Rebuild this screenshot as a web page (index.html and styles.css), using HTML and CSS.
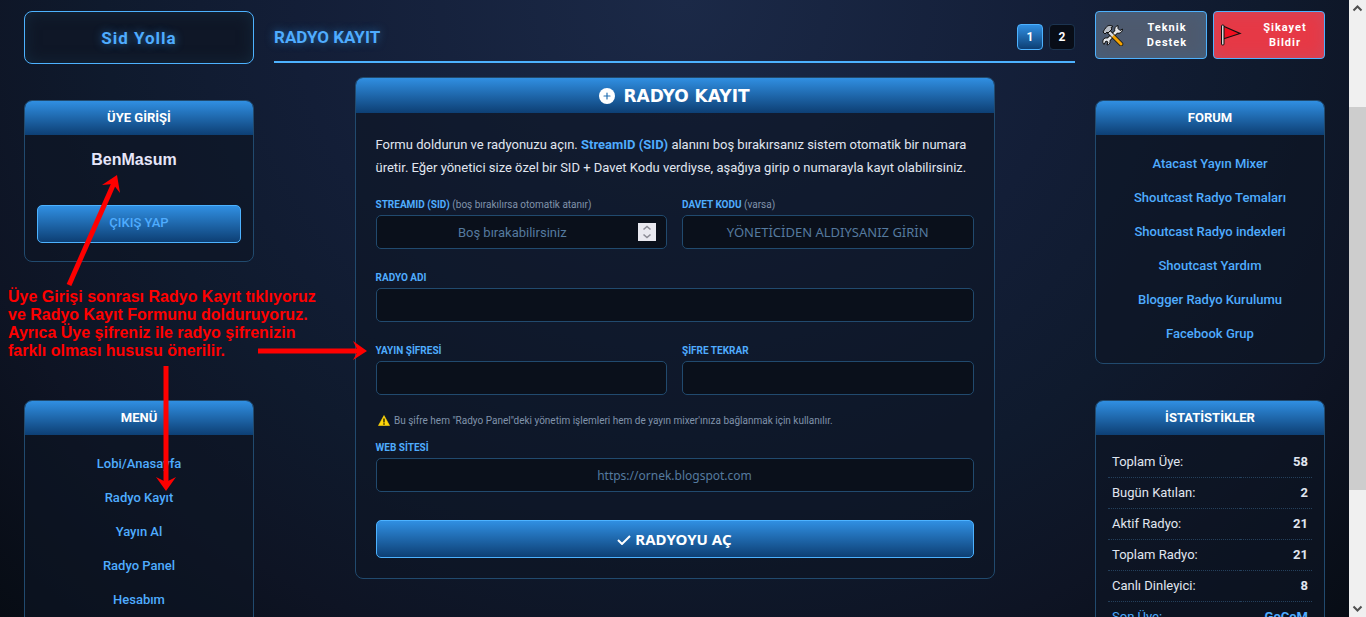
FILE: index.html
```html
<!DOCTYPE html>
<html lang="tr">
<head>
	<title>Radyo Kayıt</title>
	<meta charset="utf-8">
	<link rel="stylesheet" href="styles.css">
</head>
<body>
	<div class="page">

		<!-- sol kolon -->
		<aside class="side">
			<div class="top">
				<a href="#" class="logo">Sid Yolla</a>
			</div>
			<div class="slot">
				<section class="panel">
					<h2>ÜYE GİRİŞİ</h2>
					<div class="login">
						<p class="user">BenMasum</p>
						<button type="button" class="btn logout">ÇIKIŞ YAP</button>
					</div>
				</section>
			</div>
			<nav class="panel">
				<h2>MENÜ</h2>
				<ul class="links">
					<li><a href="#">Lobi/Anasayfa</a></li>
					<li><a href="#">Radyo Kayıt</a></li>
					<li><a href="#">Yayın Al</a></li>
					<li><a href="#">Radyo Panel</a></li>
					<li><a href="#">Hesabım</a></li>
				</ul>
			</nav>
		</aside>

		<!-- orta kolon -->
		<main class="main">
			<header class="title">
				<h1>RADYO KAYIT</h1>
				<div class="pager">
					<a href="#" class="active">1</a>
					<a href="#">2</a>
				</div>
			</header>

			<section class="panel form-panel">
				<h2>
					<svg width="16" height="16" viewBox="0 0 16 16"><circle cx="8" cy="8" r="8" fill="#fff"/><path d="M8 5v6M5 8h6" stroke="#2470b3" stroke-width="1.2" stroke-linecap="round"/></svg>
					RADYO KAYIT
				</h2>
				<form action="" method="post" onsubmit="return false;">
					<p class="intro">Formu doldurun ve radyonuzu açın. <b>StreamID (SID)</b> alanını boş bırakırsanız sistem otomatik bir numara üretir. Eğer yönetici size özel bir SID + Davet Kodu verdiyse, aşağıya girip o numarayla kayıt olabilirsiniz.</p>
					<div class="row">
						<div class="field">
							<label for="sid">STREAMID (SID) <small>(boş bırakılırsa otomatik atanır)</small></label>
							<div class="number">
								<input type="number" id="sid" name="sid" placeholder="Boş bırakabilirsiniz">
								<svg class="spin" width="18" height="18" viewBox="0 0 18 18"><path d="M5.500 6.500L9 3.500l3.500 3M5.500 11.500l3.500 3 3.500-3" fill="none" stroke="#8d8d97" stroke-width="1.600"/></svg>
							</div>
						</div>
						<div class="field">
							<label for="davet">DAVET KODU <small>(varsa)</small></label>
							<input type="text" id="davet" name="davet" placeholder="YÖNETİCİDEN ALDIYSANIZ GİRİN">
						</div>
					</div>
					<div class="field">
						<label for="ad">RADYO ADI</label>
						<input type="text" id="ad" name="ad">
					</div>
					<div class="row">
						<div class="field">
							<label for="sifre">YAYIN ŞİFRESİ</label>
							<input type="password" id="sifre" name="sifre">
						</div>
						<div class="field">
							<label for="sifre2">ŞİFRE TEKRAR</label>
							<input type="password" id="sifre2" name="sifre2">
						</div>
					</div>
					<p class="note">
						<svg width="12" height="11" viewBox="0 0 12 11"><path d="M6 .5L11.500 10.500H.5z" fill="#ffd60a" stroke="#ffd60a" stroke-width=".6"/><path d="M6 3.500v4M6 8.300v1.400" stroke="#1a1400" stroke-width="1.300"/></svg>
						Bu şifre hem "Radyo Panel"deki yönetim işlemleri hem de yayın mixer'ınıza bağlanmak için kullanılır.
					</p>
					<div class="field">
						<label for="web">WEB SİTESİ</label>
						<input type="url" id="web" name="web" placeholder="https://ornek.blogspot.com">
					</div>
					<button type="submit" class="btn submit">
						<svg width="14" height="10" viewBox="0 0 14 10"><path d="M1 5l4 4 8-8" fill="none" stroke="#fff" stroke-width="2"/></svg>
						RADYOYU AÇ
					</button>
				</form>
			</section>
		</main>

		<!-- sag kolon -->
		<aside class="side">
			<div class="top support">
				<a href="#" class="tech">
					<svg width="22" height="22" viewBox="0 0 22 22">
						<path d="M5.500 16.500L16 6" stroke="#111" stroke-width="4.500"/>
						<path d="M16 1.500a4 4 0 0 0-3 5.500l2 2a4 4 0 0 0 5.500-4l-2.500 1.500-2-2zM2 20.500a4 4 0 0 1 1-6.500 4 4 0 0 1 5 5 4 4 0 0 1-3 2l1-3-2-1z" fill="#e4e6ea" stroke="#111"/>
						<path d="M5.500 16.500L16 6" stroke="#e4e6ea" stroke-width="2.500"/>
						<path d="M7 8l12 12" stroke="#111" stroke-width="4.500" stroke-linecap="round"/>
						<path d="M11 12l8 8" stroke="#f5a300" stroke-width="3" stroke-linecap="round"/>
						<path d="M7 8l4 4" stroke="#d5d8dd" stroke-width="2.500"/>
						<path d="M1 8l2 2 2-2 1 1 4-4-1-1.500 2-1C8 .5 5.500 1.500 4 3.500L2.500 5.500z" fill="#b9bec6" stroke="#111"/>
					</svg>
					<span>Teknik Destek</span>
				</a>
				<a href="#" class="report">
					<svg width="22" height="22" viewBox="0 0 22 22">
						<path d="M3 2l17 7.500L3 15z" fill="#f01020" stroke="#111" stroke-width="1.200"/>
						<rect x="1.500" y="1" width="2.500" height="20" rx="1" fill="#d8d8d8" stroke="#111"/>
					</svg>
					<span>Şikayet Bildir</span>
				</a>
			</div>
			<nav class="panel slot">
				<h2>FORUM</h2>
				<ul class="links">
					<li><a href="#">Atacast Yayın Mixer</a></li>
					<li><a href="#">Shoutcast Radyo Temaları</a></li>
					<li><a href="#">Shoutcast Radyo indexleri</a></li>
					<li><a href="#">Shoutcast Yardım</a></li>
					<li><a href="#">Blogger Radyo Kurulumu</a></li>
					<li><a href="#">Facebook Grup</a></li>
				</ul>
			</nav>
			<section class="panel">
				<h2>İSTATİSTİKLER</h2>
				<table class="stats">
					<tr><th>Toplam Üye:</th><td>58</td></tr>
					<tr><th>Bugün Katılan:</th><td>2</td></tr>
					<tr><th>Aktif Radyo:</th><td>21</td></tr>
					<tr><th>Toplam Radyo:</th><td>21</td></tr>
					<tr><th>Canlı Dinleyici:</th><td>8</td></tr>
					<tr class="last"><th>Son Üye:</th><td>GoCoM</td></tr>
				</table>
			</section>
		</aside>
	</div>

	<!-- aciklama notu ve oklar -->
	<p class="hint">Üye Girişi sonrası Radyo Kayıt tıklıyoruz<br>ve Radyo Kayıt Formunu dolduruyoruz.<br>Ayrıca Üye şifreniz ile radyo şifrenizin<br>farklı olması hususu önerilir.</p>
	<svg class="arrows" width="380" height="500" viewBox="0 0 380 500">
		<g stroke="#f00" stroke-width="5">
			<path d="M69 285L114 183"/>
			<path d="M258 351H362"/>
			<path d="M166 366V486"/>
		</g>
		<g fill="#f00">
			<path d="M117 175L102 185 113 184 120 193z"/>
			<path d="M367 351L353 341 358 351 353 360z"/>
			<path d="M166 491L156 477 166 482 176 477z"/>
		</g>
	</svg>

	<div class="scroll">
		<svg width="17" height="17" viewBox="0 0 17 17"><path d="M4.500 10.500l4-4 4 4" fill="none" stroke="#505050" stroke-width="2"/></svg>
		<div class="thumb"></div>
		<svg width="17" height="17" viewBox="0 0 17 17"><path d="M4.500 6.500l4 4 4-4" fill="none" stroke="#505050" stroke-width="2"/></svg>
	</div>
</body>
</html>
```
FILE: styles.css
```css
* {
	box-sizing: border-box;
}
body {
	margin: 0;
	height: 100vh;
	overflow: hidden;
	position: relative;
	font-family: Roboto, "Open Sans", sans-serif;
	font-size: 13px;
	color: #e0e6f0;
	background: radial-gradient(ellipse at 50% 0, #1b2947 0%, #131e37 40%, #0f1a2d 60%, #0e1424 78%, #070c14 100%);
}
h1, h2, p, ul {
	margin: 0;
	padding: 0;
}
a {
	color: #4facfe;
	text-decoration: none;
}
.page {
	display: grid;
	grid-template-columns: 230px 1fr 230px;
	gap: 20px;
	padding: 11px 24px 0;
	margin-right: 17px;
}

/* kolon ust kismi */
.top {
	height: 53px;
	margin-bottom: 36px;
}
.logo {
	display: flex;
	align-items: center;
	justify-content: center;
	height: 100%;
	border: 1px solid #4db2ff;
	border-radius: 8px;
	background: #0f1727;
	box-shadow: inset 0 0 15px #14273a;
	font-size: 17px;
	font-weight: bold;
	letter-spacing: 1px;
	text-shadow: 0 0 8px #2769a5;
}
.slot {
	min-height: 264px;
	margin-bottom: 36px;
}

/* paneller */
.panel {
	border: 1px solid #214a6e;
	border-radius: 8px;
	background: rgba(14, 22, 37, 0.6);
	overflow: hidden;
}
.panel h2 {
	height: 34px;
	line-height: 34px;
	text-align: center;
	font-size: 13px;
	color: #fff;
	background: linear-gradient(#308fe2, #0d3f74);
}
.login {
	padding: 12px 12px 18px;
}
.user {
	padding: 2px 10px 0 0;
	margin: 0 0 34px;
	line-height: 22px;
	text-align: center;
	font-family: "Liberation Sans", Arial, sans-serif;
	font-size: 16px;
	font-weight: bold;
	color: #e6e6fa;
}
.btn {
	display: block;
	width: 100%;
	height: 38px;
	padding: 0;
	border: 1px solid #4db2ff;
	border-radius: 5px;
	background: linear-gradient(#308fe2, #0d3f74);
}
.logout {
	padding-bottom: 3px;
	font: 500 13px Roboto, sans-serif;
	color: #4facfe;
}
.links {
	list-style: none;
	padding: 12px 0;
	text-align: center;
	font-weight: 500;
}
.links li {
	line-height: 34px;
}

/* orta bolum */
.title {
	display: flex;
	align-items: center;
	justify-content: space-between;
	height: 52px;
	padding-top: 2px;
	border-bottom: 2px solid #4db2ff;
	margin-bottom: 14px;
}
.title h1 {
	font-size: 17px;
	color: #4facfe;
	text-shadow: 0 0 8px #2769a5;
}
.pager {
	display: flex;
	gap: 6px;
}
.pager a {
	width: 26px;
	height: 26px;
	line-height: 24px;
	border: 1px solid #1c3450;
	border-radius: 4px;
	background: #080d17;
	text-align: center;
	font-size: 12px;
	font-weight: bold;
	color: #fff;
}
.pager a.active {
	border-color: #4db2ff;
	background: linear-gradient(#308fe2, #0d3f74);
}
.form-panel {
	max-width: 640px;
	margin: 0 auto;
}
.form-panel h2 {
	display: flex;
	align-items: center;
	justify-content: center;
	gap: 8px;
	height: 35px;
	font-family: "DejaVu Sans", sans-serif;
	font-size: 17px;
}
form {
	padding: 20px;
}
.intro {
	margin: 0 -8px 17px 0;
	line-height: 23px;
	font-size: 13px;
}
.intro b {
	color: #4facfe;
}
.row {
	display: grid;
	grid-template-columns: 1fr 1fr;
	gap: 15px;
}
.field {
	margin-bottom: 20px;
}
label {
	display: block;
	height: 16px;
	margin-bottom: 3px;
	line-height: 17px;
	font-size: 10px;
	font-weight: bold;
	color: #4facfe;
}
label small {
	font-size: 10px;
	font-weight: normal;
	color: #8093ab;
}
input {
	display: block;
	width: 100%;
	height: 34px;
	padding: 0 10px;
	border: 1px solid #214a6e;
	border-radius: 5px;
	background: #0a101b;
	text-align: center;
	font: 13px "Noto Sans", sans-serif;
	color: #fff;
}
input::placeholder {
	color: #557a9f;
	opacity: 1;
}
input[type="url"] {
	font-size: 12px;
}
.number {
	position: relative;
}
.number input {
	padding-right: 28px;
	appearance: textfield;
	font-family: Roboto, sans-serif;
}
.number input::-webkit-inner-spin-button {
	display: none;
}
.spin {
	position: absolute;
	top: 8px;
	right: 11px;
	background: #e9e9f0;
}
.note {
	margin: -2px 0 10px 2px;
	line-height: 16px;
	font-size: 10px;
	color: #8093ab;
}
.note svg {
	margin-right: 2px;
	vertical-align: -2px;
}
.submit {
	margin-top: 28px;
	font: bold 15px "Noto Sans", sans-serif;
	color: #fff;
}

/* destek butonlari */
.support {
	display: grid;
	grid-template-columns: 1fr 1fr;
	gap: 6px;
}
.support a {
	display: flex;
	align-items: center;
	height: 48px;
	padding: 0 6px;
	border: 1px solid #4db2ff;
	border-radius: 4px;
	font-size: 11px;
	font-weight: bold;
	letter-spacing: 1px;
	line-height: 15px;
	color: #fff;
}
.support span {
	flex: 1;
	padding-left: 10px;
	text-align: center;
}
.tech {
	background: #4e5a6f;
	box-shadow: inset 0 0 15px #46607c;
}
.report {
	background: #e63946;
	box-shadow: inset 0 0 15px #cf475b;
}

/* istatistik */
.stats {
	width: calc(100% - 24px);
	margin: 11px 12px;
	border-collapse: collapse;
}
.stats th, .stats td {
	height: 31px;
	padding: 0 4px;
	border-bottom: 1px dotted #24405c;
	font-size: 13px;
}
.stats th {
	text-align: left;
	font-weight: normal;
}
.stats td {
	text-align: right;
	font-weight: bold;
}
.last th, .last td {
	color: #4facfe;
}

/* notlar */
.hint {
	position: absolute;
	left: 8px;
	top: 288px;
	font: bold 16px/18px "Liberation Sans", Arial, sans-serif;
	color: #f00;
}
.arrows {
	position: absolute;
	left: 0;
	top: 0;
	pointer-events: none;
}

/* kaydirma cubugu */
.scroll {
	position: fixed;
	top: 0;
	right: 0;
	bottom: 0;
	width: 17px;
	display: flex;
	flex-direction: column;
	background: #f0f0f0;
}
.scroll svg {
	flex: none;
}
.scroll .thumb {
	height: 62%;
	margin: 90px 0 auto;
	background: #cdcdcd;
}
```
